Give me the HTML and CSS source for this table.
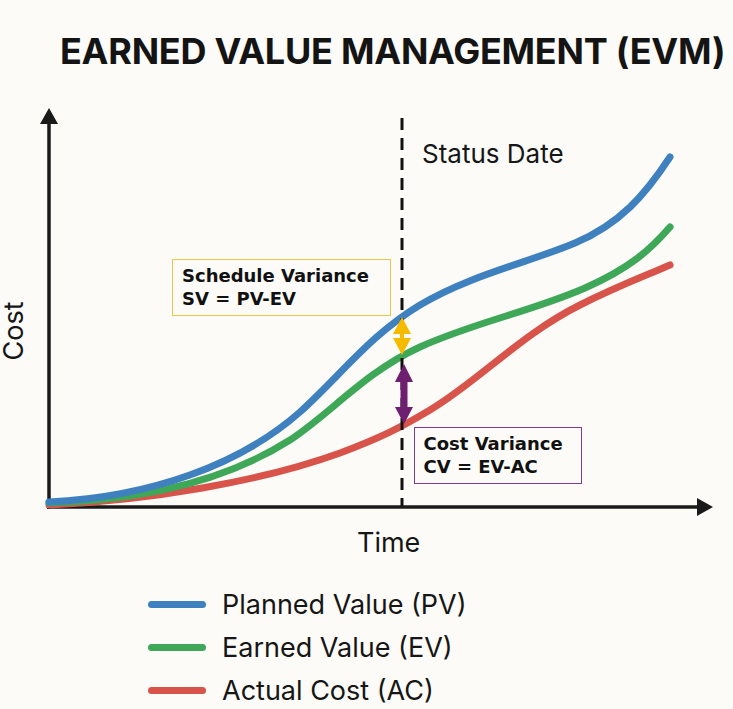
FILE: index.html
```html
<!DOCTYPE html>
<html lang="en">
<head>
<meta charset="utf-8">
<title>Earned Value Management (EVM)</title>
<link rel="stylesheet" href="styles.css">
</head>
<body>
<main class="page">
  <h1 class="title">EARNED VALUE MANAGEMENT (EVM)</h1>
  <figure class="chart">
    <svg class="plot" width="733" height="470" viewBox="0 95 733 470" xmlns="http://www.w3.org/2000/svg">
      <!-- axes -->
      <line class="axis" x1="49" y1="120" x2="49" y2="509"/>
      <polygon class="axis-head" points="49,108 40,124 58,124"/>
      <line class="axis" x1="47.3" y1="507" x2="700" y2="507"/>
      <polygon class="axis-head" points="713,507 697,498 697,516"/>

      <!-- curves -->
      <path class="curve ac" d="M49,505 C150,500 260,482 340,453 C380,438 400,428 430,410 C480,380 520,335 580,305 C620,285 645,276 670,265"/>
      <path class="curve ev" d="M49,503 C150,500 230,478 290,440 C330,414 365,372 420,347 C475,322 530,312 585,288 C630,268 650,250 670,227"/>
      <path class="curve pv" d="M49,502 C150,497 240,465 300,412 C340,376 370,335 420,305 C470,275 530,262 575,243 C620,224 645,195 670,157"/>

      <!-- status date -->
      <line class="status" x1="402" y1="118" x2="402" y2="506"/>
      <text class="label status-label" x="422" y="163">Status Date</text>

      <!-- schedule variance arrow -->
      <polygon class="arrow-sv" points="402,317 393,334 400,334 400,338 393,338 402,355 411,338 404,338 404,334 411,334"/>
      <!-- cost variance arrow -->
      <polygon class="arrow-cv" points="404,364 395,382 400.5,382 400.5,407 395,407 404,424 413,407 407.5,407 407.5,382 413,382"/>

      <!-- axis labels -->
      <text class="label axis-label" x="357" y="552">Time</text>
      <text class="label axis-label" transform="translate(23,331) rotate(-90)" text-anchor="middle">Cost</text>
    </svg>
    <div class="note note-sv">Schedule Variance<br>SV = PV-EV</div>
    <div class="note note-cv">Cost Variance<br>CV = EV-AC</div>
  </figure>
  <ul class="legend">
    <li class="legend-item"><span class="swatch swatch-pv"></span>Planned Value (PV)</li>
    <li class="legend-item"><span class="swatch swatch-ev"></span>Earned Value (EV)</li>
    <li class="legend-item"><span class="swatch swatch-ac"></span>Actual Cost (AC)</li>
  </ul>
</main>
</body>
</html>
```
FILE: styles.css
```css
html, body {
  margin: 0;
  padding: 0;
  background: #fcfbf7;
}

.page {
  width: 733px;
  height: 709px;
  overflow: hidden;
  color: #161616;
  font-family: Inter, "Noto Sans", sans-serif;
}

.title {
  box-sizing: border-box;
  height: 95px;
  margin: 0;
  padding: 29px 0 0 60px;
  font-family: Inter, "Noto Sans", sans-serif;
  font-weight: 700;
  font-size: 36px;
  line-height: 45px;
  letter-spacing: -0.25px;
  white-space: nowrap;
  color: #141414;
}

.chart {
  position: relative;
  margin: 0;
  width: 733px;
  height: 470px;
}

.plot {
  display: block;
}

.axis {
  stroke: #1a1a1a;
  stroke-width: 3.5;
}

.axis-head {
  fill: #1a1a1a;
}

.curve {
  fill: none;
  stroke-width: 7;
  stroke-linecap: round;
  stroke-linejoin: round;
}

.pv { stroke: #3f80bf; }
.ev { stroke: #3fa758; }
.ac { stroke: #d8534a; }

.status {
  stroke: #111;
  stroke-width: 3;
  stroke-dasharray: 12 8;
}

.arrow-sv { fill: #f6bb00; }
.arrow-cv { fill: #6d1f70; }

.label {
  font-family: Inter, "Noto Sans", sans-serif;
  fill: #161616;
}

.status-label { font-size: 26px; }
.axis-label { font-size: 27px; }

.note {
  position: absolute;
  box-sizing: border-box;
  font-family: "DejaVu Sans", Verdana, sans-serif;
  font-weight: 700;
  font-size: 18px;
  line-height: 22.5px;
  color: #111;
  white-space: nowrap;
  background: #fcfbf7;
}

.note-sv {
  left: 172px;
  top: 164px;
  width: 219px;
  height: 57px;
  padding: 5px 0 0 9px;
  border: 1.5px solid #e8c64c;
}

.note-cv {
  left: 414px;
  top: 332px;
  width: 168px;
  height: 57px;
  padding: 5px 0 0 8.5px;
  border: 1.5px solid #7d3c8c;
}

.legend {
  list-style: none;
  margin: 0;
  padding: 17.5px 0 0 148px;
}

.legend-item {
  display: flex;
  align-items: center;
  gap: 16px;
  height: 43px;
  font-size: 27px;
  color: #161616;
  white-space: nowrap;
}

.swatch {
  display: block;
  width: 58px;
  height: 7px;
  border-radius: 4px;
}

.swatch-pv { background: #3f80bf; }
.swatch-ev { background: #3fa758; }
.swatch-ac { background: #d8534a; }
```
